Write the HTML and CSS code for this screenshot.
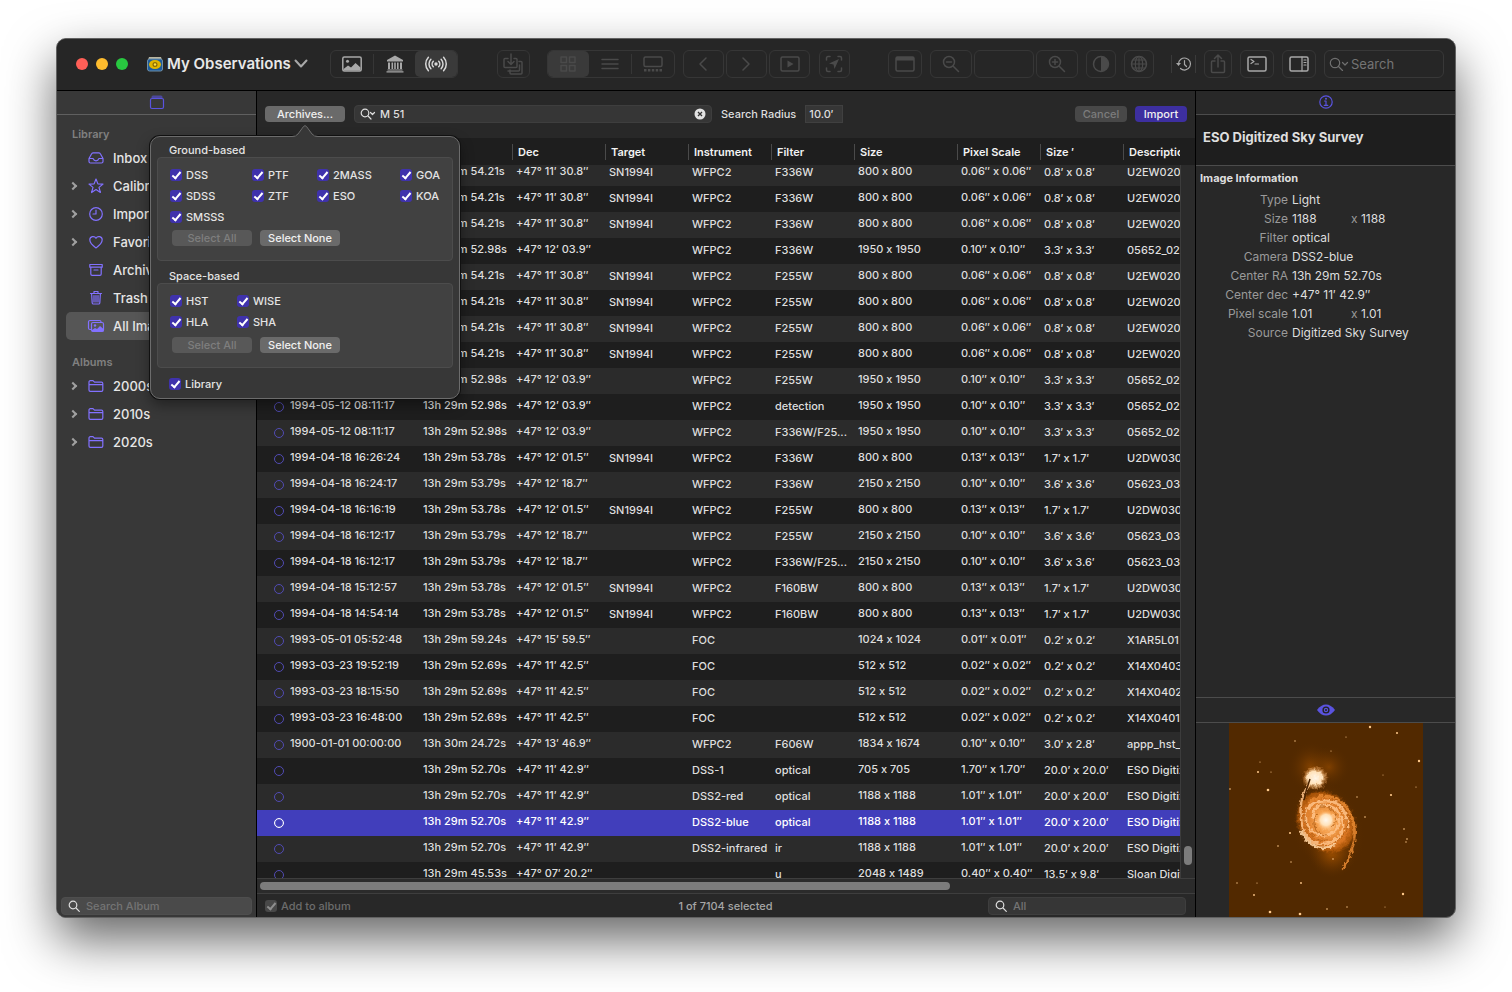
FILE: index.html
```html
<!DOCTYPE html>
<html lang="en">
<head>
<meta charset="utf-8">
<meta name="viewport" content="width=device-width, initial-scale=1">
<title>My Observations</title>
<link rel="stylesheet" href="styles.css">
</head>
<body>

<div class="window">

  <!-- Toolbar -->
  <header class="toolbar">
    <div class="title-block">
      <div class="lights"><i class="red"></i><i class="yellow"></i><i class="green"></i></div>
      <svg class="app-icon" width="16" height="16" viewBox="0 0 16 16"><path d="M2 1h12l1 3H1z" fill="#b9b5a0"/><rect x="0.5" y="3" width="15" height="12" rx="2" fill="#1d5c9c" stroke="#6f8fa8"/><ellipse cx="8" cy="8.500" rx="6" ry="4.500" fill="#e0b400"/><circle cx="8" cy="8.500" r="2.500" fill="#8a6d00"/><circle cx="8" cy="8.500" r="1.200" fill="#ffe14a"/></svg>
      <h1>My Observations</h1>
      <svg class="title-menu" width="14" height="9" viewBox="0 0 14 9"><path d="M1.500 1.500L7 7.500l5.500-6" class="line"/></svg>
    </div>

    <div class="segmented bright">
      <button aria-label="Images"><svg width="22" height="18" viewBox="0 0 22 18"><rect x="1.800" y="2" width="18.400" height="14" rx="1.500" class="line"/><circle cx="6.500" cy="6.300" r="1.500" fill="currentColor"/><path d="M2.500 14l4.500-3.500 3 2L14.500 8l5 4.500v3h-17z" fill="currentColor"/></svg></button>
      <button class="sep" aria-label="Archive"><svg width="20" height="18" viewBox="0 0 20 18"><path d="M10 0.500L18 5v1.500H2V5zM3 7.500h2v6.500H3zM6.500 7.500h1.600v6.500H6.500zM9.200 7.500h1.600v6.500H9.200zM12 7.500h1.600v6.500H12zM15 7.500h2v6.500h-2zM2.500 14.500h15v1h-15zM1.500 16.300h17v1.200h-17z" fill="currentColor"/></svg></button>
      <button class="active" aria-label="Online"><svg width="24" height="18" viewBox="0 0 24 18"><circle cx="12" cy="9" r="1.700" fill="currentColor"/><path d="M9.300 6.200a4 4 0 0 0 0 5.600M14.700 6.200a4 4 0 0 1 0 5.600M6.900 4.200a7 7 0 0 0 0 9.600M17.100 4.200a7 7 0 0 1 0 9.600M4.400 2.200a10 10 0 0 0 0 13.600M19.600 2.200a10 10 0 0 1 0 13.600" class="line"/></svg></button>
    </div>

    <div class="spacer"></div>
    <button class="tool w33" aria-label="Import images"><svg width="22" height="22" viewBox="0 0 22 22"><path d="M6 5.500H3A1 1 0 0 0 2 6.500v7a1 1 0 0 0 1 1h11a1 1 0 0 0 1-1v-7a1 1 0 0 0-1-1h-2M9 1v10M6 8.500l3 3 3-3M17 8.500h2a1 1 0 0 1 1 1V20a1 1 0 0 1-1 1H9a1 1 0 0 1-1-1v-3M17.500 12v5a1 1 0 0 1-1 1H6" class="line"/></svg></button>

    <div class="segmented wide-gap">
      <button class="active" aria-label="Grid"><svg width="16" height="16" viewBox="0 0 16 16"><path d="M1 1h5.500v5.500H1zM9.500 1H15v5.500H9.500zM1 9.500h5.500V15H1zM9.500 9.500H15V15H9.500z" class="line"/></svg></button>
      <button aria-label="List"><svg width="18" height="12" viewBox="0 0 18 12"><path d="M1 1.500h16M1 6h16M1 10.500h16" class="line"/></svg></button>
      <button class="sep" aria-label="Filmstrip"><svg width="20" height="16" viewBox="0 0 20 16"><rect x="1" y="1" width="18" height="9.500" rx="1.500" class="line"/><path d="M1 13h2.500v2.500H1zM4.900 13h2.500v2.500H4.900zM8.800 13h2.500v2.500H8.800zM12.700 13h2.500v2.500h-2.500zM16.500 13H19v2.500h-2.500z" fill="currentColor"/></svg></button>
    </div>

    <div class="trio">
      <button class="tool" aria-label="Previous"><svg width="10" height="14" viewBox="0 0 10 14"><path d="M8 1L2 7l6 6" class="line"/></svg></button>
      <button class="tool" aria-label="Next"><svg width="10" height="14" viewBox="0 0 10 14"><path d="M2 1l6 6-6 6" class="line"/></svg></button>
      <button class="tool" aria-label="Play"><svg width="20" height="16" viewBox="0 0 20 16"><rect x="1" y="1" width="18" height="14" rx="1.500" class="line"/><path d="M7.500 4.500v7l6-3.500z" fill="currentColor"/></svg></button>
    </div>
    <button class="tool w31" aria-label="Locate"><svg width="18" height="18" viewBox="0 0 18 18"><path d="M1.500 5V3A1.500 1.500 0 0 1 3 1.500h2M13 1.500h2A1.500 1.500 0 0 1 16.500 3v2M16.500 13v2a1.500 1.500 0 0 1-1.500 1.500h-2M5 16.500H3A1.500 1.500 0 0 1 1.500 15v-2" class="line"/><path d="M14 4L4 8.500l4.500 1L9.500 14z" fill="currentColor"/></svg></button>

    <div class="spacer"></div>
    <button class="tool w34" aria-label="Window"><svg width="20" height="16" viewBox="0 0 20 16"><rect x="1" y="1" width="18" height="14" rx="1.500" class="line"/><path d="M1 1h18v3.500H1z" fill="currentColor"/></svg></button>
    <div class="zoom-group">
      <button class="tool" aria-label="Zoom out"><svg width="18" height="18" viewBox="0 0 18 18"><path d="M11.500 11.500l5 5M4.500 7h5" class="line"/><circle cx="7" cy="7" r="5.500" class="line"/></svg></button>
      <span class="tool zoom-value"></span>
      <button class="tool" aria-label="Zoom in"><svg width="18" height="18" viewBox="0 0 18 18"><path d="M11.500 11.500l5 5M4.500 7h5M7 4.500v5" class="line"/><circle cx="7" cy="7" r="5.500" class="line"/></svg></button>
    </div>
    <button class="tool w30" aria-label="Contrast"><svg width="18" height="18" viewBox="0 0 18 18"><circle cx="9" cy="9" r="7.500" class="line"/><path d="M9 1.500a7.500 7.500 0 0 1 0 15z" fill="currentColor"/></svg></button>
    <button class="tool w30" aria-label="Globe"><svg width="18" height="18" viewBox="0 0 18 18"><circle cx="9" cy="9" r="7.500" class="line"/><ellipse cx="9" cy="9" rx="3.700" ry="7.500" class="line thin"/><path d="M9 1.500v15M1.500 9h15M2.800 5h12.400M2.800 13h12.400" class="line thin"/></svg></button>

    <button class="history wide-gap" aria-label="History"><svg width="16" height="16" viewBox="0 0 16 16"><path d="M2.500 8a6 6 0 1 1 2 4.500M8.500 4.500V8.500l2 2" class="line thin"/><path d="M0 7h5L2.500 10z" fill="currentColor"/></svg></button>
    <button class="tool w28" aria-label="Share"><svg width="18" height="20" viewBox="0 0 18 20"><path d="M6 7H3.500A1 1 0 0 0 2.500 8v9.500a1 1 0 0 0 1 1h11a1 1 0 0 0 1-1V8a1 1 0 0 0-1-1H12M9 13V1.500M5.500 4.500L9 1l3.500 3.500" class="line"/></svg></button>
    <button class="tool w34 bright" aria-label="Console"><svg width="20" height="16" viewBox="0 0 20 16"><rect x="1" y="1" width="18" height="14" rx="1.500" class="line"/><path d="M4 3.500l3 2-3 2M8 8h3.500" class="line thin"/></svg></button>
    <button class="tool w34 bright" aria-label="Inspector"><svg width="20" height="16" viewBox="0 0 20 16"><rect x="1" y="1" width="18" height="14" rx="1.500" class="line"/><path d="M13 1v14M15 4h2M15 6.500h2M15 9h2" class="line thin"/></svg></button>
    <label class="field main-search">
      <svg width="20" height="14" viewBox="0 0 20 14"><circle cx="6" cy="6" r="4.700" class="line thin"/><path d="M9.500 9.500l4 4M13.500 5.500l2.500 2.500 2.500-2.500" class="line thin"/></svg>
      <input type="text" placeholder="Search" aria-label="Search">
    </label>
  </header>

  <div class="panes">

    <!-- Sidebar -->
    <nav class="sidebar">
      <div class="pane-header"><svg width="16" height="16" viewBox="0 0 16 16"><rect x="1.500" y="4.500" width="13" height="10" rx="1.500" class="line"/><path d="M2.500 4V3a1.500 1.500 0 0 1 1.500-1.500h8A1.500 1.500 0 0 1 13.500 3v1z" fill="currentColor" opacity=".6"/></svg></div>

      <h2>Library</h2>
      <a href="#inbox"><b></b><svg width="16" height="16" viewBox="0 0 16 16"><path d="M1 8.500L3.500 4Q4 2.800 5 2.800h6q1 0 1.500 1.200L15 8.500v3a1.500 1.500 0 0 1-1.500 1.500h-11A1.500 1.500 0 0 1 1 11.500zM1 8.500h4q1 2.300 3 2.300t3-2.300h4" class="line"/></svg>Inbox</a>
      <a href="#calibration"><b class="more"></b><svg width="16" height="16" viewBox="0 0 16 16"><path d="M8 1l1.900 4.900 5.100.2-4 3.300 1.400 5.100L8 11.600l-4.400 2.900L5 9.400 1 6.100l5.100-.2z" class="line"/></svg>Calibration</a>
      <a href="#imports"><b class="more"></b><svg width="16" height="16" viewBox="0 0 16 16"><circle cx="8" cy="8" r="6.300" class="line"/><path d="M8 4v4H5" class="line"/></svg>Imports</a>
      <a href="#favorites"><b class="more"></b><svg width="16" height="16" viewBox="0 0 16 16"><path d="M8 14Q1.800 9.500 1.800 5.800A3.300 3.300 0 0 1 8 4.300a3.300 3.300 0 0 1 6.200 1.500Q14.200 9.500 8 14z" class="line"/></svg>Favorites</a>
      <a href="#archive"><b></b><svg width="16" height="16" viewBox="0 0 16 16"><path d="M1.800 2.500h12.400v2.700H1.800zM2.800 5.200h10.400V12a1.300 1.300 0 0 1-1.300 1.300H4.100A1.300 1.300 0 0 1 2.800 12zM6 8h4" class="line"/></svg>Archive</a>
      <a href="#trash"><b></b><svg width="16" height="16" viewBox="0 0 16 16"><path d="M2.500 3.500h11M6 3.500V1.500h4v2M3.600 3.500l.6 9.500a1.200 1.200 0 0 0 1.200 1h5.200a1.200 1.200 0 0 0 1.200-1l.6-9.500M6 5.500v6.500M8 5.500v6.500M10 5.500v6.500" class="line"/></svg>Trash</a>
      <a href="#all" class="selected"><b></b><svg width="18" height="16" viewBox="0 0 18 16"><path d="M3.500 11.500H3A1.500 1.500 0 0 1 1.500 10V4A1.500 1.500 0 0 1 3 2.500h9.500A1.500 1.500 0 0 1 14 4" class="line"/><rect x="4.500" y="4.500" width="12" height="9" rx="1.500" class="line"/><circle cx="8" cy="7.500" r="1.200" fill="currentColor"/><path d="M5 12l3-2 2 1 3-3 3.500 3v2.500H5z" fill="currentColor"/></svg>All Images</a>

      <h2>Albums</h2>
      <a href="#2000s"><b class="more"></b><svg width="16" height="16" viewBox="0 0 16 16"><path d="M1 4a1.300 1.300 0 0 1 1.300-1.300H5l1.500 1.500h7A1.300 1.300 0 0 1 14.800 5.500V12a1.300 1.300 0 0 1-1.300 1.300H2.300A1.300 1.300 0 0 1 1 12zM1 6.700h13.800" class="line"/></svg>2000s</a>
      <a href="#2010s"><b class="more"></b><svg width="16" height="16" viewBox="0 0 16 16"><path d="M1 4a1.300 1.300 0 0 1 1.300-1.300H5l1.500 1.500h7A1.300 1.300 0 0 1 14.800 5.500V12a1.300 1.300 0 0 1-1.300 1.300H2.300A1.300 1.300 0 0 1 1 12zM1 6.700h13.800" class="line"/></svg>2010s</a>
      <a href="#2020s"><b class="more"></b><svg width="16" height="16" viewBox="0 0 16 16"><path d="M1 4a1.300 1.300 0 0 1 1.300-1.300H5l1.500 1.500h7A1.300 1.300 0 0 1 14.800 5.500V12a1.300 1.300 0 0 1-1.300 1.300H2.300A1.300 1.300 0 0 1 1 12zM1 6.700h13.800" class="line"/></svg>2020s</a>

      <label class="field album-search">
        <svg width="12" height="12" viewBox="0 0 12 12"><circle cx="5" cy="5" r="3.800" class="line"/><path d="M8 8l3.300 3.300" class="line"/></svg>
        <input type="text" placeholder="Search Album" aria-label="Search Album">
      </label>
    </nav>

    <!-- Search results -->
    <main class="results">
      <div class="query">
        <div class="archives">
          <button class="btn">Archives...</button>

          <div class="popover">
            <h3>Ground-based</h3>
            <div class="box">
              <div class="checks ground">
                <label><input type="checkbox" checked>DSS</label>
                <label><input type="checkbox" checked>PTF</label>
                <label><input type="checkbox" checked>2MASS</label>
                <label><input type="checkbox" checked>GOA</label>
                <label><input type="checkbox" checked>SDSS</label>
                <label><input type="checkbox" checked>ZTF</label>
                <label><input type="checkbox" checked>ESO</label>
                <label><input type="checkbox" checked>KOA</label>
                <label><input type="checkbox" checked>SMSSS</label>
              </div>
              <div class="pick"><button class="btn" disabled>Select All</button><button class="btn">Select None</button></div>
            </div>
            <h3>Space-based</h3>
            <div class="box">
              <div class="checks space">
                <label><input type="checkbox" checked>HST</label>
                <label><input type="checkbox" checked>WISE</label>
                <label><input type="checkbox" checked>HLA</label>
                <label><input type="checkbox" checked>SHA</label>
              </div>
              <div class="pick"><button class="btn" disabled>Select All</button><button class="btn">Select None</button></div>
            </div>
            <label class="library"><input type="checkbox" checked>Library</label>
            <svg class="arrow" width="26" height="13" viewBox="0 0 26 13"><path d="M0 13Q4 12.500 6 10L11.500 2.500Q13 .800 14.500 2.500L20 10Q22 12.500 26 13z" fill="#373737"/><path d="M0 12.500Q4 12.500 6 10L11.500 2.500Q13 .800 14.500 2.500L20 10Q22 12.500 26 12.500" fill="none" stroke="#6c6c6c"/></svg>
          </div>
        </div>

        <label class="field object">
          <svg width="16" height="12" viewBox="0 0 16 12"><circle cx="5" cy="5" r="3.800" class="line"/><path d="M8 8l3 3M10.500 4.500l2 2 2-2" class="line"/></svg>
          <input type="text" value="M 51" aria-label="Object">
          <svg width="12" height="12" viewBox="0 0 12 12"><circle cx="6" cy="6" r="5.500" fill="#e2e2e2"/><path d="M4 4l4 4M8 4l-4 4" fill="none" stroke="#333" stroke-width="1.300"/></svg>
        </label>
        <label for="radius">Search Radius</label>
        <input type="text" id="radius" value="10.0′">
        <div class="actions">
          <button class="btn" disabled>Cancel</button>
          <button class="btn primary">Import</button>
        </div>
      </div>

      <div class="grid">
        <table class="head">
          <colgroup><col class="c-dot"><col class="c-date"><col class="c-pos"><col class="c-pos"><col class="c-std"><col class="c-std"><col class="c-std"><col class="c-size"><col class="c-std"><col class="c-std"><col></colgroup>
          <tr><th></th><th></th><th></th><th><span>Dec</span></th><th><span>Target</span></th><th><span>Instrument</span></th><th><span>Filter</span></th><th><span>Size</span></th><th><span>Pixel Scale</span></th><th><span>Size ′</span></th><th><span>Description</span></th></tr>
        </table>
        <div class="rows">
          <table>
            <colgroup><col class="c-dot"><col class="c-date"><col class="c-pos"><col class="c-pos"><col class="c-std"><col class="c-std"><col class="c-std"><col class="c-size"><col class="c-std"><col class="c-std"><col></colgroup>
            <tbody>
            <tr><td><i></i></td><td></td><td>13h 29m 54.21s</td><td>+47° 11′ 30.8″</td><td>SN1994I</td><td>WFPC2</td><td>F336W</td><td>800 x 800</td><td>0.06″ x 0.06″</td><td>0.8′ x 0.8′</td><td>U2EW0201</td></tr>
            <tr><td><i></i></td><td></td><td>13h 29m 54.21s</td><td>+47° 11′ 30.8″</td><td>SN1994I</td><td>WFPC2</td><td>F336W</td><td>800 x 800</td><td>0.06″ x 0.06″</td><td>0.8′ x 0.8′</td><td>U2EW0201</td></tr>
            <tr><td><i></i></td><td></td><td>13h 29m 54.21s</td><td>+47° 11′ 30.8″</td><td>SN1994I</td><td>WFPC2</td><td>F336W</td><td>800 x 800</td><td>0.06″ x 0.06″</td><td>0.8′ x 0.8′</td><td>U2EW0201</td></tr>
            <tr><td><i></i></td><td></td><td>13h 29m 52.98s</td><td>+47° 12′ 03.9″</td><td></td><td>WFPC2</td><td>F336W</td><td>1950 x 1950</td><td>0.10″ x 0.10″</td><td>3.3′ x 3.3′</td><td>05652_02</td></tr>
            <tr><td><i></i></td><td></td><td>13h 29m 54.21s</td><td>+47° 11′ 30.8″</td><td>SN1994I</td><td>WFPC2</td><td>F255W</td><td>800 x 800</td><td>0.06″ x 0.06″</td><td>0.8′ x 0.8′</td><td>U2EW0201</td></tr>
            <tr><td><i></i></td><td></td><td>13h 29m 54.21s</td><td>+47° 11′ 30.8″</td><td>SN1994I</td><td>WFPC2</td><td>F255W</td><td>800 x 800</td><td>0.06″ x 0.06″</td><td>0.8′ x 0.8′</td><td>U2EW0201</td></tr>
            <tr><td><i></i></td><td></td><td>13h 29m 54.21s</td><td>+47° 11′ 30.8″</td><td>SN1994I</td><td>WFPC2</td><td>F255W</td><td>800 x 800</td><td>0.06″ x 0.06″</td><td>0.8′ x 0.8′</td><td>U2EW0201</td></tr>
            <tr><td><i></i></td><td></td><td>13h 29m 54.21s</td><td>+47° 11′ 30.8″</td><td>SN1994I</td><td>WFPC2</td><td>F255W</td><td>800 x 800</td><td>0.06″ x 0.06″</td><td>0.8′ x 0.8′</td><td>U2EW0201</td></tr>
            <tr><td><i></i></td><td></td><td>13h 29m 52.98s</td><td>+47° 12′ 03.9″</td><td></td><td>WFPC2</td><td>F255W</td><td>1950 x 1950</td><td>0.10″ x 0.10″</td><td>3.3′ x 3.3′</td><td>05652_02</td></tr>
            <tr><td><i></i></td><td>1994-05-12 08:11:17</td><td>13h 29m 52.98s</td><td>+47° 12′ 03.9″</td><td></td><td>WFPC2</td><td>detection</td><td>1950 x 1950</td><td>0.10″ x 0.10″</td><td>3.3′ x 3.3′</td><td>05652_02</td></tr>
            <tr><td><i></i></td><td>1994-05-12 08:11:17</td><td>13h 29m 52.98s</td><td>+47° 12′ 03.9″</td><td></td><td>WFPC2</td><td>F336W/F25...</td><td>1950 x 1950</td><td>0.10″ x 0.10″</td><td>3.3′ x 3.3′</td><td>05652_02</td></tr>
            <tr><td><i></i></td><td>1994-04-18 16:26:24</td><td>13h 29m 53.78s</td><td>+47° 12′ 01.5″</td><td>SN1994I</td><td>WFPC2</td><td>F336W</td><td>800 x 800</td><td>0.13″ x 0.13″</td><td>1.7′ x 1.7′</td><td>U2DW0301</td></tr>
            <tr><td><i></i></td><td>1994-04-18 16:24:17</td><td>13h 29m 53.79s</td><td>+47° 12′ 18.7″</td><td></td><td>WFPC2</td><td>F336W</td><td>2150 x 2150</td><td>0.10″ x 0.10″</td><td>3.6′ x 3.6′</td><td>05623_03</td></tr>
            <tr><td><i></i></td><td>1994-04-18 16:16:19</td><td>13h 29m 53.78s</td><td>+47° 12′ 01.5″</td><td>SN1994I</td><td>WFPC2</td><td>F255W</td><td>800 x 800</td><td>0.13″ x 0.13″</td><td>1.7′ x 1.7′</td><td>U2DW0301</td></tr>
            <tr><td><i></i></td><td>1994-04-18 16:12:17</td><td>13h 29m 53.79s</td><td>+47° 12′ 18.7″</td><td></td><td>WFPC2</td><td>F255W</td><td>2150 x 2150</td><td>0.10″ x 0.10″</td><td>3.6′ x 3.6′</td><td>05623_03</td></tr>
            <tr><td><i></i></td><td>1994-04-18 16:12:17</td><td>13h 29m 53.79s</td><td>+47° 12′ 18.7″</td><td></td><td>WFPC2</td><td>F336W/F25...</td><td>2150 x 2150</td><td>0.10″ x 0.10″</td><td>3.6′ x 3.6′</td><td>05623_03</td></tr>
            <tr><td><i></i></td><td>1994-04-18 15:12:57</td><td>13h 29m 53.78s</td><td>+47° 12′ 01.5″</td><td>SN1994I</td><td>WFPC2</td><td>F160BW</td><td>800 x 800</td><td>0.13″ x 0.13″</td><td>1.7′ x 1.7′</td><td>U2DW0301</td></tr>
            <tr><td><i></i></td><td>1994-04-18 14:54:14</td><td>13h 29m 53.78s</td><td>+47° 12′ 01.5″</td><td>SN1994I</td><td>WFPC2</td><td>F160BW</td><td>800 x 800</td><td>0.13″ x 0.13″</td><td>1.7′ x 1.7′</td><td>U2DW0301</td></tr>
            <tr><td><i></i></td><td>1993-05-01 05:52:48</td><td>13h 29m 59.24s</td><td>+47° 15′ 59.5″</td><td></td><td>FOC</td><td></td><td>1024 x 1024</td><td>0.01″ x 0.01″</td><td>0.2′ x 0.2′</td><td>X1AR5L01</td></tr>
            <tr><td><i></i></td><td>1993-03-23 19:52:19</td><td>13h 29m 52.69s</td><td>+47° 11′ 42.5″</td><td></td><td>FOC</td><td></td><td>512 x 512</td><td>0.02″ x 0.02″</td><td>0.2′ x 0.2′</td><td>X14X0403</td></tr>
            <tr><td><i></i></td><td>1993-03-23 18:15:50</td><td>13h 29m 52.69s</td><td>+47° 11′ 42.5″</td><td></td><td>FOC</td><td></td><td>512 x 512</td><td>0.02″ x 0.02″</td><td>0.2′ x 0.2′</td><td>X14X0402</td></tr>
            <tr><td><i></i></td><td>1993-03-23 16:48:00</td><td>13h 29m 52.69s</td><td>+47° 11′ 42.5″</td><td></td><td>FOC</td><td></td><td>512 x 512</td><td>0.02″ x 0.02″</td><td>0.2′ x 0.2′</td><td>X14X0401</td></tr>
            <tr><td><i></i></td><td>1900-01-01 00:00:00</td><td>13h 30m 24.72s</td><td>+47° 13′ 46.9″</td><td></td><td>WFPC2</td><td>F606W</td><td>1834 x 1674</td><td>0.10″ x 0.10″</td><td>3.0′ x 2.8′</td><td>appp_hst_</td></tr>
            <tr><td><i></i></td><td></td><td>13h 29m 52.70s</td><td>+47° 11′ 42.9″</td><td></td><td>DSS-1</td><td>optical</td><td>705 x 705</td><td>1.70″ x 1.70″</td><td>20.0′ x 20.0′</td><td>ESO Digitized</td></tr>
            <tr><td><i></i></td><td></td><td>13h 29m 52.70s</td><td>+47° 11′ 42.9″</td><td></td><td>DSS2-red</td><td>optical</td><td>1188 x 1188</td><td>1.01″ x 1.01″</td><td>20.0′ x 20.0′</td><td>ESO Digitized</td></tr>
            <tr class="current"><td><i></i></td><td></td><td>13h 29m 52.70s</td><td>+47° 11′ 42.9″</td><td></td><td>DSS2-blue</td><td>optical</td><td>1188 x 1188</td><td>1.01″ x 1.01″</td><td>20.0′ x 20.0′</td><td>ESO Digitized</td></tr>
            <tr><td><i></i></td><td></td><td>13h 29m 52.70s</td><td>+47° 11′ 42.9″</td><td></td><td>DSS2-infrared</td><td>ir</td><td>1188 x 1188</td><td>1.01″ x 1.01″</td><td>20.0′ x 20.0′</td><td>ESO Digitized</td></tr>
            <tr><td><i></i></td><td></td><td>13h 29m 45.53s</td><td>+47° 07′ 20.2″</td><td></td><td></td><td>u</td><td>2048 x 1489</td><td>0.40″ x 0.40″</td><td>13.5′ x 9.8′</td><td>Sloan Digital</td></tr>
            </tbody>
          </table>
        </div>
        <div class="vbar"><i></i></div>
      </div>
      <div class="hbar"><i></i></div>

      <footer class="status">
        <label class="add"><input type="checkbox" checked disabled>Add to album</label>
        <span>1 of 7104 selected</span>
        <label class="field filter">
          <svg width="12" height="12" viewBox="0 0 12 12"><circle cx="5" cy="5" r="3.800" class="line"/><path d="M8 8l3.300 3.300" class="line"/></svg>
          <input type="text" placeholder="All" aria-label="Filter results">
        </label>
      </footer>
    </main>

    <!-- Inspector -->
    <aside class="inspector">
      <div class="pane-header"><svg width="16" height="16" viewBox="0 0 16 16"><circle cx="8" cy="8" r="6.200" class="line"/><circle cx="8" cy="4.700" r="1" fill="currentColor"/><path d="M6.500 7H8v4.300M6.200 11.300h3.600" class="line"/></svg></div>
      <h2>ESO Digitized Sky Survey</h2>
      <h3>Image Information</h3>
      <dl>
        <dt>Type</dt><dd>Light</dd>
        <dt>Size</dt><dd class="pair"><span>1188</span><em>x</em> 1188</dd>
        <dt>Filter</dt><dd>optical</dd>
        <dt>Camera</dt><dd>DSS2-blue</dd>
        <dt>Center RA</dt><dd>13h 29m 52.70s</dd>
        <dt>Center dec</dt><dd>+47° 11′ 42.9″</dd>
        <dt>Pixel scale</dt><dd class="pair"><span>1.01</span><em>x</em> 1.01</dd>
        <dt>Source</dt><dd>Digitized Sky Survey</dd>
      </dl>
      <div class="pane-header preview-header"><svg width="18" height="12" viewBox="0 0 18 12"><path d="M0 6Q4 .500 9 .500T18 6Q14 11.500 9 11.500T0 6z" fill="currentColor"/><circle cx="9" cy="6" r="3.600" fill="#222"/><circle cx="9" cy="6" r="2.200" fill="currentColor"/><circle cx="9" cy="6" r="1" fill="#222"/></svg></div>
      <svg class="preview" viewBox="0 0 194 194">
        <defs>
          <radialGradient id="disk"><stop offset="0" stop-color="#fff0d8"/><stop offset=".3" stop-color="#f5a250"/><stop offset=".7" stop-color="#d87420"/><stop offset=".88" stop-color="#b05808" stop-opacity=".85"/><stop offset="1" stop-color="#6a3400" stop-opacity="0"/></radialGradient>
          <radialGradient id="haze"><stop offset="0" stop-color="#c06000" stop-opacity=".8"/><stop offset="1" stop-color="#522900" stop-opacity="0"/></radialGradient>
          <radialGradient id="core"><stop offset="0" stop-color="#fff8ee"/><stop offset=".55" stop-color="#ffe2ba"/><stop offset="1" stop-color="#ff9a3a" stop-opacity="0"/></radialGradient>
          <filter id="rough" x="-20%" y="-20%" width="140%" height="140%" color-interpolation-filters="sRGB"><feTurbulence type="fractalNoise" baseFrequency=".3" numOctaves="2" seed="4" result="n"/><feDisplacementMap in="SourceGraphic" in2="n" scale="5" xChannelSelector="R" yChannelSelector="G"/><feGaussianBlur stdDeviation=".7"/></filter>
        </defs>
        <rect width="194" height="194" fill="#522900"/>
        <ellipse cx="82" cy="44" rx="24" ry="26" fill="url(#haze)" opacity=".6"/>
        <ellipse cx="100" cy="44" rx="22" ry="22" fill="url(#haze)" opacity=".5"/>
        <ellipse cx="103" cy="130" rx="25" ry="26" fill="url(#haze)"/>
        <ellipse cx="98" cy="104" rx="36" ry="50" transform="rotate(-22 98 104)" fill="url(#haze)"/>
        <g filter="url(#rough)">
          <ellipse cx="97" cy="99" rx="29" ry="35" transform="rotate(-38 97 99)" fill="url(#disk)"/>
          <g fill="none" stroke="#ffc48a" stroke-linecap="round" stroke-width="3" opacity=".85">
            <path d="M97 96C108 88 115 100 106 108S80 112 77 98 84 78 98 78 118 90 119 104"/>
            <path d="M97 96C88 104 80 94 86 86S108 82 113 96 107 120 94 121 74 112 72 96 74 70 82 58" stroke-width="2.500"/>
            <path d="M80 80C92 68 112 72 121 90S125 128 114 146" stroke="#e88a32" stroke-width="2.500"/>
            <path d="M72 108C78 122 92 130 106 121" stroke="#ffd8a8" stroke-width="2.500"/>
          </g>
          <g fill="none" stroke="#b05e14" stroke-width="1" opacity=".9">
            <path d="M90 90C80 98 86 112 98 112M103 103C112 94 104 82 92 83M77 86C72 104 84 120 98 117M117 96C120 108 112 118 106 119M121 128l4-12"/>
          </g>
        </g>
        <circle cx="97" cy="97" r="10" fill="url(#core)"/>
        <ellipse cx="86" cy="55" rx="13" ry="12" fill="url(#core)" filter="url(#rough)"/>
        <path d="M75 77q2-10 6-21" fill="none" stroke="#482200" stroke-width="1.500"/>
        <g fill="#ffc98a">
          <circle cx="141" cy="4" r="1.200"/><circle cx="168" cy="10" r="1"/><circle cx="190" cy="38" r="1.200"/><circle cx="29" cy="49" r="1"/><circle cx="39" cy="67" r="1.300"/><circle cx="162" cy="72" r="1.100"/><circle cx="61" cy="110" r="1"/><circle cx="49" cy="123" r=".8"/><circle cx="136" cy="94" r=".8"/><circle cx="175" cy="106" r=".8"/><circle cx="178" cy="116" r=".8"/><circle cx="177" cy="119" r=".7"/><circle cx="174" cy="171" r="1.200"/><circle cx="72" cy="160" r=".9"/><circle cx="25" cy="172" r=".9"/><circle cx="41" cy="189" r="1.300"/><circle cx="71" cy="191" r="1.300"/><circle cx="104" cy="136" r=".8"/><circle cx="62" cy="139" r=".7"/><circle cx="98" cy="186" r=".8"/><circle cx="118" cy="184" r=".7"/><circle cx="66" cy="18" r=".7"/><circle cx="102" cy="28" r=".6"/><circle cx="31" cy="39" r=".6"/><circle cx="42" cy="49" r=".6"/><circle cx="8" cy="160" r=".7"/><circle cx="28" cy="160" r=".6"/><circle cx="154" cy="52" r=".5"/><circle cx="128" cy="74" r=".7"/><circle cx="187" cy="64" r=".6"/><circle cx="117" cy="14" r=".6"/><circle cx="156" cy="184" r=".5"/><circle cx="1" cy="66" r=".8"/>
        </g>
      </svg>
    </aside>
  </div>
</div>

</body>
</html>
```
FILE: styles.css
```css
* {box-sizing: border-box}

body {
  margin: 0;
  height: 100vh;
  padding: 38px 56px 74px;
  background-color: #fff;
  font-family: Inter, "Liberation Sans", sans-serif;
  font-size: 11px;
  font-weight: 500;
  line-height: 16px;
  color: #dedede;
}

h1, h2, h3, dl, dd {
  margin: 0;
}

button, input {
  font: inherit;
  color: inherit;
}

svg {
  display: block;
  flex: none;
}

.line {
  fill: none;
  stroke: currentColor;
  stroke-width: 1.2;
  stroke-linecap: round;
  stroke-linejoin: round;
}

.toolbar .line {stroke-width: 1.5}
.toolbar .thin {stroke-width: 1.2}

.window {
  display: flex;
  flex-direction: column;
  height: 100%;
  border: 1px solid #626262;
  border-radius: 10px;
  overflow: hidden;
  background-color: #282828;
  box-shadow: 0 22px 50px rgba(0, 0, 0, 0.6);
}

/* Toolbar */
.toolbar {
  display: flex;
  align-items: center;
  gap: 8px;
  height: 52px;
  flex: none;
  padding: 0 11px 2px 19px;
  border-bottom: 1px solid #000;
  background-color: #262626;
  color: #4a4a4a;
}

.title-block {
  display: flex;
  align-items: center;
  width: 246px;
  flex: none;
}

.title-block h1 {
  margin: 0 3px 0 4px;
  font-size: 15px;
  line-height: 20px;
  font-weight: 600;
  color: #e8e8e8;
  white-space: nowrap;
}

.title-menu {color: #a8a8a8}
.toolbar .title-menu .line {stroke-width: 2}

.lights {
  display: flex;
  gap: 8px;
  margin-right: 19px;
}

.lights i {
  width: 12px;
  height: 12px;
  border-radius: 50%;
}

.lights .red {background-color: #ff5f57}
.lights .yellow {background-color: #febc2e}
.lights .green {background-color: #28c840}

.spacer {flex: 1}

.tool, .segmented {
  display: flex;
  align-items: center;
  justify-content: center;
  height: 28px;
  padding: 0;
  flex: none;
  border: 1px solid #363636;
  border-radius: 6px;
  background-color: transparent;
}

.segmented {width: 128px}

.segmented button {
  display: flex;
  align-items: center;
  justify-content: center;
  flex: 1;
  height: 26px;
  padding: 0;
  border: none;
  border-radius: 5px;
  background-color: transparent;
}

.segmented .active {background-color: #3a3a3a}

.segmented .sep {
  height: 20px;
  border-left: 1px solid #363636;
  border-radius: 0;
}

.bright {color: #a8a8a8}
.segmented.bright .active {color: #d8d8d8}

.wide-gap {margin-left: 9px}
.w28 {width: 28px}
.w30 {width: 30px}
.w31 {width: 31px}
.w33 {width: 33px}
.w34 {width: 34px}

.trio, .zoom-group {
  display: flex;
  gap: 2px;
  flex: none;
}

.trio {width: 128px}
.trio .tool {flex: 1}
.zoom-group .tool {width: 42px}
.zoom-group .zoom-value {width: 60px}

.history {
  display: flex;
  align-items: center;
  justify-content: center;
  width: 25px;
  height: 18px;
  padding: 0;
  border: solid #3a3a3a;
  border-width: 0 1px;
  background-color: transparent;
  color: #a8a8a8;
}

/* Text fields with a leading icon */
.field {
  display: flex;
  align-items: center;
  height: 18px;
  border-radius: 4px;
  background-color: #363636;
  border: 1px solid #3e3e3e;
}

.field input {
  flex: 1;
  min-width: 0;
  padding: 0;
  border: none;
  outline: none;
  background: none;
}

.field input::placeholder {
  color: #747474;
  opacity: 1;
}

.main-search {
  width: 120px;
  height: 28px;
  padding: 0 4px;
  border: 1px solid #383838;
  border-radius: 6px;
  background: none;
  color: #6f6f6f;
}

.main-search input {
  margin-left: 2px;
  font-size: 13px;
  font-weight: 400;
}

/* Panes */
.panes {
  display: flex;
  flex: 1;
  min-height: 0;
}

.pane-header {
  display: flex;
  align-items: center;
  justify-content: center;
  height: 24px;
  flex: none;
  padding-bottom: 1px;
  border-bottom: 1px solid #4c4c4c;
  color: #5a53e0;
}

.sidebar {
  display: flex;
  flex-direction: column;
  width: 200px;
  flex: none;
  background-color: #383838;
  border-right: 1px solid #000;
}

.sidebar .pane-header {
  margin-bottom: 9px;
  border-color: #606060;
}

.sidebar h2 {
  padding-left: 15px;
  font-size: 11px;
  line-height: 20px;
  font-weight: 600;
  color: #808080;
}

.sidebar a + h2 {margin-top: 12px}

.sidebar a {
  display: flex;
  align-items: center;
  height: 28px;
  margin: 0 9px;
  border-radius: 5px;
  font-size: 13px;
  color: #e6e6e6;
  text-decoration: none;
}

.sidebar a svg {
  width: 18px;
  height: 16px;
  margin-right: 8px;
  color: #8271ff;
}

.sidebar b {
  width: 6px;
  height: 6px;
  margin: 0 11px 0 4px;
}

.sidebar .more {
  border: solid #a0a0a0;
  border-width: 2px 2px 0 0;
  transform: rotate(45deg);
}

.sidebar .selected {background-color: #565656}

.album-search {
  margin: auto 4px 2px;
  padding: 0 6px;
  background-color: #4a4a4a;
  border-color: #4e4e4e;
}

.album-search input, .filter input {margin-left: 6px}

/* Query bar */
.results {
  display: flex;
  flex-direction: column;
  flex: 1;
  min-width: 0;
}

.query {
  display: flex;
  align-items: center;
  height: 47px;
  flex: none;
  padding: 0 8px 2px;
}

.btn {
  height: 16px;
  padding: 0 8px;
  border: none;
  border-radius: 4px;
  background-color: #6a6a6a;
  line-height: 16px;
  color: #f0f0f0;
  white-space: nowrap;
}

.btn:disabled {
  background-color: #484848;
  color: #7c7c7c;
}

.btn.primary {
  background-color: #3d2fa0;
}

.archives {position: relative}
.archives > .btn {width: 80px}

.object {
  width: 358px;
  margin: 0 9px;
  padding: 0 5px;
}

.object input {margin-left: 4px}

#radius {
  width: 38px;
  height: 18px;
  margin-left: 9px;
  padding: 0 3px;
  border: 1px solid #404040;
  background-color: #363636;
}

.actions {
  display: flex;
  gap: 8px;
  margin-left: auto;
}

.actions .btn {
  width: 52px;
  padding: 0;
}

/* Archive picker */
.popover {
  position: absolute;
  top: 30px;
  left: -115px;
  z-index: 10;
  width: 310px;
  padding: 6px 7px;
  border: 1px solid #6c6c6c;
  border-radius: 10px;
  background-color: #373737;
  box-shadow: 0 0 0 1px #111, 0 6px 14px rgba(0, 0, 0, 0.4);
  color: #e4e4e4;
}

.arrow {
  position: absolute;
  top: -13px;
  left: 141px;
}

.popover h3 {
  padding-left: 11px;
  font-size: 11px;
  font-weight: 500;
  line-height: 14px;
}

.box {
  margin: 0 -1px 8px;
  padding: 7px 12px 14px;
  border: 1px solid #4c4c4c;
  border-radius: 4px;
  background-color: #414141;
}

.checks {
  display: grid;
  grid-auto-rows: 21px;
}

.ground {grid-template-columns: 82px 65px 83px auto}

.space {
  grid-template-columns: 67px auto;
  padding-bottom: 2px;
}

.checks label, .library, .add {
  display: flex;
  align-items: center;
}

.library {margin-left: 11px}

input[type="checkbox"] {
  appearance: none;
  position: relative;
  width: 12px;
  height: 12px;
  margin: 0 4px 0 0;
  border-radius: 3px;
  background-color: #3f32ac;
}

input[type="checkbox"]::after {
  content: "";
  box-sizing: border-box;
  position: absolute;
  left: 4px;
  top: 1px;
  width: 5px;
  height: 9px;
  border: solid #fff;
  border-width: 0 2px 2px 0;
  transform: rotate(40deg);
}

.pick {
  display: flex;
  gap: 8px;
  padding: 2px 2px 0;
}

.pick .btn {
  width: 80px;
  padding: 0;
}

.pick .btn:disabled {
  background-color: #585858;
  color: #7e7e7e;
}

/* Result table */
.grid {
  display: grid;
  grid-template-columns: 1fr 15px;
  grid-template-rows: 27px 1fr;
  flex: 1;
  min-height: 0;
  background-color: #1e1e1e;
}

table {
  width: 100%;
  table-layout: fixed;
  border-collapse: collapse;
}

.c-dot {width: 29px}
.c-date {width: 133px}
.c-pos {width: 93px}
.c-std {width: 83px}
.c-size {width: 103px}

th, td {
  padding: 0;
  overflow: hidden;
  white-space: nowrap;
  text-align: left;
}

th {
  height: 27px;
  font-weight: 600;
  color: #f2f2f2;
}

th span {
  display: block;
  padding-left: 5px;
  border-left: 1px solid #4a4a4a;
}

.rows {
  grid-column: 1;
  overflow: hidden;
}

/* list is scrolled part way into the first row */
.rows table {margin-top: -5px}

td {
  height: 26px;
  padding: 0 0 2px 4px;
}

td:nth-child(2), td:nth-child(3), td:nth-child(4), td:nth-child(8), td:nth-child(9) {
  padding-bottom: 4px;
}

/* keep the x between two numbers a letter */
td:nth-child(8) {font-variant-ligatures: no-contextual}

tbody tr:nth-child(odd) td {background-color: #2b2b2b}
tbody .current:nth-child(n) td {
  background-color: #413ebb;
  color: #fff;
}

td:first-child {padding: 0 0 0 17px}

td i {
  display: block;
  width: 10px;
  height: 10px;
  border: 1px solid #514bb4;
  border-radius: 50%;
}

.current i {border-color: #fff; box-shadow: inset 0 0 1px #fff}

.vbar {
  grid-column: 2;
  display: flex;
  flex-direction: column;
  justify-content: flex-end;
  padding: 0 3px 13px;
  border-left: 1px solid #3c3c3c;
  background-color: #2b2b2b;
}

.vbar i {
  height: 19px;
  border-radius: 4px;
  background-color: #7c7c7c;
}

.hbar {
  height: 16px;
  flex: none;
  padding: 3px;
  border: solid #3e3e3e;
  border-width: 1px 0;
  background-color: #2b2b2b;
}

.hbar i {
  display: block;
  width: 74%;
  height: 8px;
  border-radius: 4px;
  background-color: #7c7c7c;
}

.status {
  display: grid;
  grid-template-columns: 1fr auto 1fr;
  align-items: center;
  height: 23px;
  flex: none;
  padding: 0 9px 0 8px;
  color: #a6a6a6;
}

.add {color: #6c6c6c}
.add input[type="checkbox"] {background-color: #484848}
.add input[type="checkbox"]::after {border-color: #8e8e8e}

.filter {
  justify-self: end;
  width: 198px;
  padding: 0 6px;
  color: #dedede;
}

/* Inspector */
.inspector {
  display: flex;
  flex-direction: column;
  width: 260px;
  flex: none;
  border-left: 1px solid #000;
}

.inspector h2 {
  height: 51px;
  flex: none;
  padding: 14px 7px;
  border-bottom: 1px solid #4c4c4c;
  background-color: #1e1e1e;
  font-size: 13px;
  font-weight: 700;
}

.inspector h3 {
  padding: 4px;
  font-size: 11px;
  font-weight: 700;
}

dl {
  display: grid;
  grid-template-columns: 92px 1fr;
  column-gap: 4px;
  font-size: 12px;
  line-height: 19px;
  font-weight: 400;
}

dt {
  text-align: right;
  color: #9a9a9a;
}

.pair span {
  display: inline-block;
  width: 59px;
}

.pair em {
  font-style: normal;
  color: #9a9a9a;
}

.preview-header {
  height: 26px;
  margin-top: auto;
  padding: 0;
  border-top: 1px solid #4c4c4c;
}

.preview {
  width: 194px;
  height: 194px;
  align-self: center;
}
```
